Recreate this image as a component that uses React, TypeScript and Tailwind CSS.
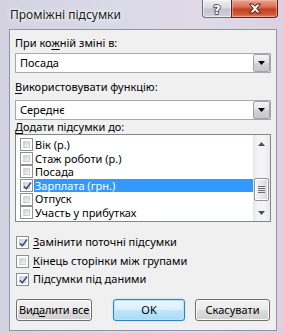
import React from "react";

const font = "font-['Segoe_UI','Noto_Sans','Open_Sans',sans-serif]";

function Check({ checked }: { checked?: boolean }) {
  return (
    <div className="relative w-[13px] h-[13px] shrink-0 border border-[#8e8f8f] bg-white">
      <div className="absolute inset-[2px] bg-[linear-gradient(135deg,#c9ccd1_0%,#e2e3e6_50%,#f6f6f6_100%)] border border-[#b5b8bd]/40" />
      {checked && (
        <svg className="absolute left-[1px] top-[1px]" width="11" height="11" viewBox="0 0 11 11">
          <path d="M2 5.2 L4.3 7.8 L9 1.6" fill="none" stroke="#3b4f8c" strokeWidth="1.6" strokeLinejoin="round" />
        </svg>
      )}
    </div>
  );
}

function Combo({ value }: { value: string }) {
  return (
    <div className="h-[20px] flex items-center border border-[#a7a9ae] bg-white">
      <div className="flex-1 pl-[4px] text-[11px] leading-[14px] text-black">{value}</div>
      <div className="w-[17px] h-[18px] border border-[#9fa1a6] rounded-[2px] bg-[linear-gradient(#f4f4f4,#e3e3e3_50%,#d3d3d3_51%,#c9c9c9)] flex items-center justify-center">
        <svg width="7" height="4" viewBox="0 0 7 4">
          <path d="M0 0 H7 L3.5 4 Z" fill="#000" />
        </svg>
      </div>
    </div>
  );
}

function Btn({ children, def, w }: { children: React.ReactNode; def?: boolean; w: string }) {
  return (
    <div
      className={`${w} h-[22px] rounded-[3px] border flex items-center justify-center text-[11px] leading-[14px] text-black whitespace-nowrap ${
        def
          ? "border-[#3c7fb1] shadow-[inset_0_0_0_1px_#b5e5fb,0_0_2px_#9fd4f5] bg-[linear-gradient(#eaf6fd,#d9f0fc_50%,#bee6fd_51%,#a7d9f5)]"
          : "border-[#707070] shadow-[inset_0_0_0_1px_#fcfcfc] bg-[linear-gradient(#f2f2f2,#ebebeb_50%,#dddddd_51%,#cfcfcf)]"
      }`}
    >
      {children}
    </div>
  );
}

const items = [
  { t: "Вік (р.)" },
  { t: "Стаж роботи (р.)" },
  { t: "Посада" },
  { t: "Зарплата (грн.)", checked: true, sel: true },
  { t: "Отпуск" },
  { t: "Участь у прибутках" },
];

export default function App() {
  return (
    <div className={`${font} w-[284px] h-[333px] overflow-hidden bg-[linear-gradient(90deg,#d3d2e0_0%,#dad9e7_40%,#e0d9e8_75%,#dcd0e0_100%)] flex flex-col`}>
      {/* title bar */}
      <div className="h-[29px] flex items-start shrink-0">
        <div className="pl-[10px] pt-[7px] text-[12px] leading-[15px] text-[#1a1a1a] [text-shadow:0_0_6px_#ffffff,0_0_3px_#ffffff]">
          Проміжні підсумки
        </div>
        <div className="flex-1" />
        <div className="flex mr-[6px]">
          <div className="w-[29px] h-[18px] rounded-bl-[4px] border border-t-0 border-r-0 border-[#6b6e80] bg-[linear-gradient(#eeeef3,#dadae2_45%,#c3c3ce_55%,#d2d2dc)] shadow-[inset_0_0_0_1px_rgba(255,255,255,0.6)] flex items-center justify-center">
            <svg width="14" height="16" viewBox="0 0 14 16">
              <text x="7" y="13" textAnchor="middle" fontSize="13" fontWeight="bold" fontFamily="DejaVu Sans, sans-serif" fill="#ffffff" stroke="#3a3f4e" strokeWidth="1.6" paintOrder="stroke">?</text>
            </svg>
          </div>
          <div className="w-[47px] h-[18px] rounded-br-[4px] border border-t-0 border-[#5a2218] bg-[linear-gradient(#e8a594,#d8705a_40%,#c5401f_55%,#cf5a3b_85%,#e08a6a)] shadow-[inset_0_0_0_1px_rgba(255,200,180,0.5)] flex items-center justify-center">
            <svg width="14" height="11" viewBox="0 0 14 11">
              <path d="M1.5 1 L5 1 L7 3.3 L9 1 L12.5 1 L8.8 5.5 L12.5 10 L9 10 L7 7.7 L5 10 L1.5 10 L5.2 5.5 Z" fill="#ffffff" stroke="#4a1a10" strokeWidth="1" strokeLinejoin="round" />
            </svg>
          </div>
        </div>
      </div>

      {/* client area */}
      <div className="ml-[9px] mr-[7px] h-[302px] border border-[#8f93a4] bg-[#f0f0f0] flex flex-col px-[5px] text-[11px] text-black shrink-0">
        <div className="mt-[6px] h-[14px] leading-[14px]">
          При ко<span className="underline underline-offset-2">ж</span>ній зміні в:
        </div>
        <div className="mt-[3px]">
          <Combo value="Посада" />
        </div>
        <div className="mt-[7px] h-[14px] leading-[14px]">
          <span className="underline underline-offset-2">В</span>икористовувати функцію:
        </div>
        <div className="mt-[6px]">
          <Combo value="Середнє" />
        </div>
        <div className="h-[14px] leading-[14px]">
          <span className="underline underline-offset-2">Д</span>одати підсумки до:
        </div>
        <div className="h-[88px] border border-[#828790] bg-white flex">
          <div className="flex-1 flex flex-col pt-[3px]">
            {items.map((it) => (
              <div key={it.t} className="h-[13.6px] flex items-center">
                <div className="w-[4px]" />
                <Check checked={it.checked} />
                <div
                  className={`flex-1 h-[13.6px] ml-[1px] pl-[1px] leading-[13.6px] ${
                    it.sel ? "bg-[#3399ff] text-white" : ""
                  }`}
                >
                  {it.t}
                </div>
              </div>
            ))}
          </div>
          <div className="w-[17px] bg-[linear-gradient(90deg,#e6e6e6,#f4f4f4_30%,#f4f4f4_70%,#e9e9e9)] flex flex-col items-center">
            <div className="h-[17px] flex items-center justify-center">
              <svg width="7" height="4" viewBox="0 0 7 4">
                <path d="M0 4 H7 L3.5 0 Z" fill="#4d4d4d" />
              </svg>
            </div>
            <div className="h-[26px]" />
            <div className="w-[15px] h-[23px] rounded-[2px] border border-[#959595] bg-[linear-gradient(90deg,#f3f3f3,#e8e8e8_50%,#d6d6d6)] shadow-[inset_0_0_0_1px_#ffffff] flex flex-col items-center justify-center gap-[1px]">
              <div className="w-[7px] h-[1px] bg-[#6f6f6f]" />
              <div className="w-[7px] h-[1px] bg-[#6f6f6f]" />
              <div className="w-[7px] h-[1px] bg-[#6f6f6f]" />
              <div className="w-[7px] h-[1px] bg-[#6f6f6f]" />
            </div>
            <div className="flex-1" />
            <div className="h-[17px] flex items-center justify-center">
              <svg width="7" height="4" viewBox="0 0 7 4">
                <path d="M0 0 H7 L3.5 4 Z" fill="#4d4d4d" />
              </svg>
            </div>
          </div>
        </div>

        <div className="mt-[11px] h-[18px] flex items-center pl-[1px]">
          <Check checked />
          <span className="ml-[4px]">
            <span className="underline underline-offset-2">З</span>амінити поточні підсумки
          </span>
        </div>
        <div className="mt-[1px] h-[18px] flex items-center pl-[1px]">
          <Check />
          <span className="ml-[4px]">
            <span className="underline underline-offset-2">К</span>інець сторінки між групами
          </span>
        </div>
        <div className="h-[18px] flex items-center pl-[1px]">
          <Check checked />
          <span className="ml-[4px]">Підсумки під даними</span>
        </div>

        <div className="mt-[11px] flex items-center pl-[1px]">
          <Btn w="w-[76px]">
            <span className="tracking-[-0.2px]">
              Вид<span className="underline underline-offset-2">а</span>лити все
            </span>
          </Btn>
          <div className="w-[21px]" />
          <Btn w="w-[72px]" def>
            OK
          </Btn>
          <div className="w-[10px]" />
          <Btn w="w-[75px]">Скасувати</Btn>
        </div>
      </div>
    </div>
  );
}
